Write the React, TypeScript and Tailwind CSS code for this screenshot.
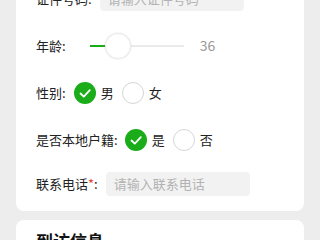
import React from "react";

const font = { fontFamily: '"Noto Sans CJK SC", "Noto Sans", sans-serif' };

function Checked() {
  return (
    <span className="flex h-[22px] w-[22px] items-center justify-center rounded-full bg-[#1aad19]">
      <svg width="22" height="22" viewBox="0 0 22 22">
        <path d="M6.5 11.5 L9.8 14.6 L15.8 8.2" fill="none" stroke="#ffffff" strokeWidth="1.8" strokeLinecap="round" strokeLinejoin="round" />
      </svg>
    </span>
  );
}

function Unchecked() {
  return <span className="block h-[22px] w-[22px] rounded-full border border-[#d6d6d6] bg-white" />;
}

export default function App() {
  return (
    <div className="min-h-screen overflow-hidden bg-[#ededed] px-[16px] text-[13px] text-[#222]" style={font}>
      <div className="-mt-[40px] rounded-[8px] bg-white px-[20px] pt-[16px] pb-[6px]">
        <div className="flex h-[46px] items-center">
          <span>证件号码</span>
          <span>:</span>
          <div className="ml-[8px] flex h-[24px] w-[144px] items-center rounded-[4px] bg-[#f2f2f2] pl-[8px] text-[#b2b2b2]">请输入证件号码</div>
        </div>
        <div className="flex h-[47px] items-center">
          <span>年龄</span>
          <span>:</span>
          <div className="relative ml-[24px] h-[26px] w-[94px]">
            <div className="absolute left-0 right-0 top-[12px] h-[2px] bg-[#ebebeb]" />
            <div className="absolute left-0 top-[12px] h-[2px] w-[16px] bg-[#1aad19]" />
            <div className="absolute left-[15px] top-0 h-[26px] w-[26px] rounded-full border border-[#ececec] bg-white shadow-[0_0_2px_rgba(0,0,0,0.12)]" />
          </div>
          <span className="ml-[16px] text-[14px] text-[#999]">36</span>
        </div>
        <div className="flex h-[48px] items-center">
          <span>性别</span>
          <span>:</span>
          <span className="ml-[8px]"><Checked /></span>
          <span className="ml-[5px]">男</span>
          <span className="ml-[8px]"><Unchecked /></span>
          <span className="ml-[5px]">女</span>
        </div>
        <div className="flex h-[46px] items-center">
          <span>是否本地户籍</span>
          <span>:</span>
          <span className="ml-[7px]"><Checked /></span>
          <span className="ml-[5px]">是</span>
          <span className="ml-[8px]"><Unchecked /></span>
          <span className="ml-[5px]">否</span>
        </div>
        <div className="flex h-[42px] items-center">
          <span>联系电话</span>
          <span className="text-[#e64340]">*</span>
          <span>:</span>
          <div className="ml-[8px] flex h-[24px] w-[144px] items-center rounded-[4px] bg-[#f2f2f2] pl-[8px] text-[#b2b2b2]">请输入联系电话</div>
        </div>
      </div>
      <div className="mt-[9px] rounded-[8px] bg-white px-[20px] pt-[9px] pb-[20px]">
        <div className="text-[17px] font-bold leading-[24px] text-[#111]">到访信息</div>
      </div>
    </div>
  );
}
